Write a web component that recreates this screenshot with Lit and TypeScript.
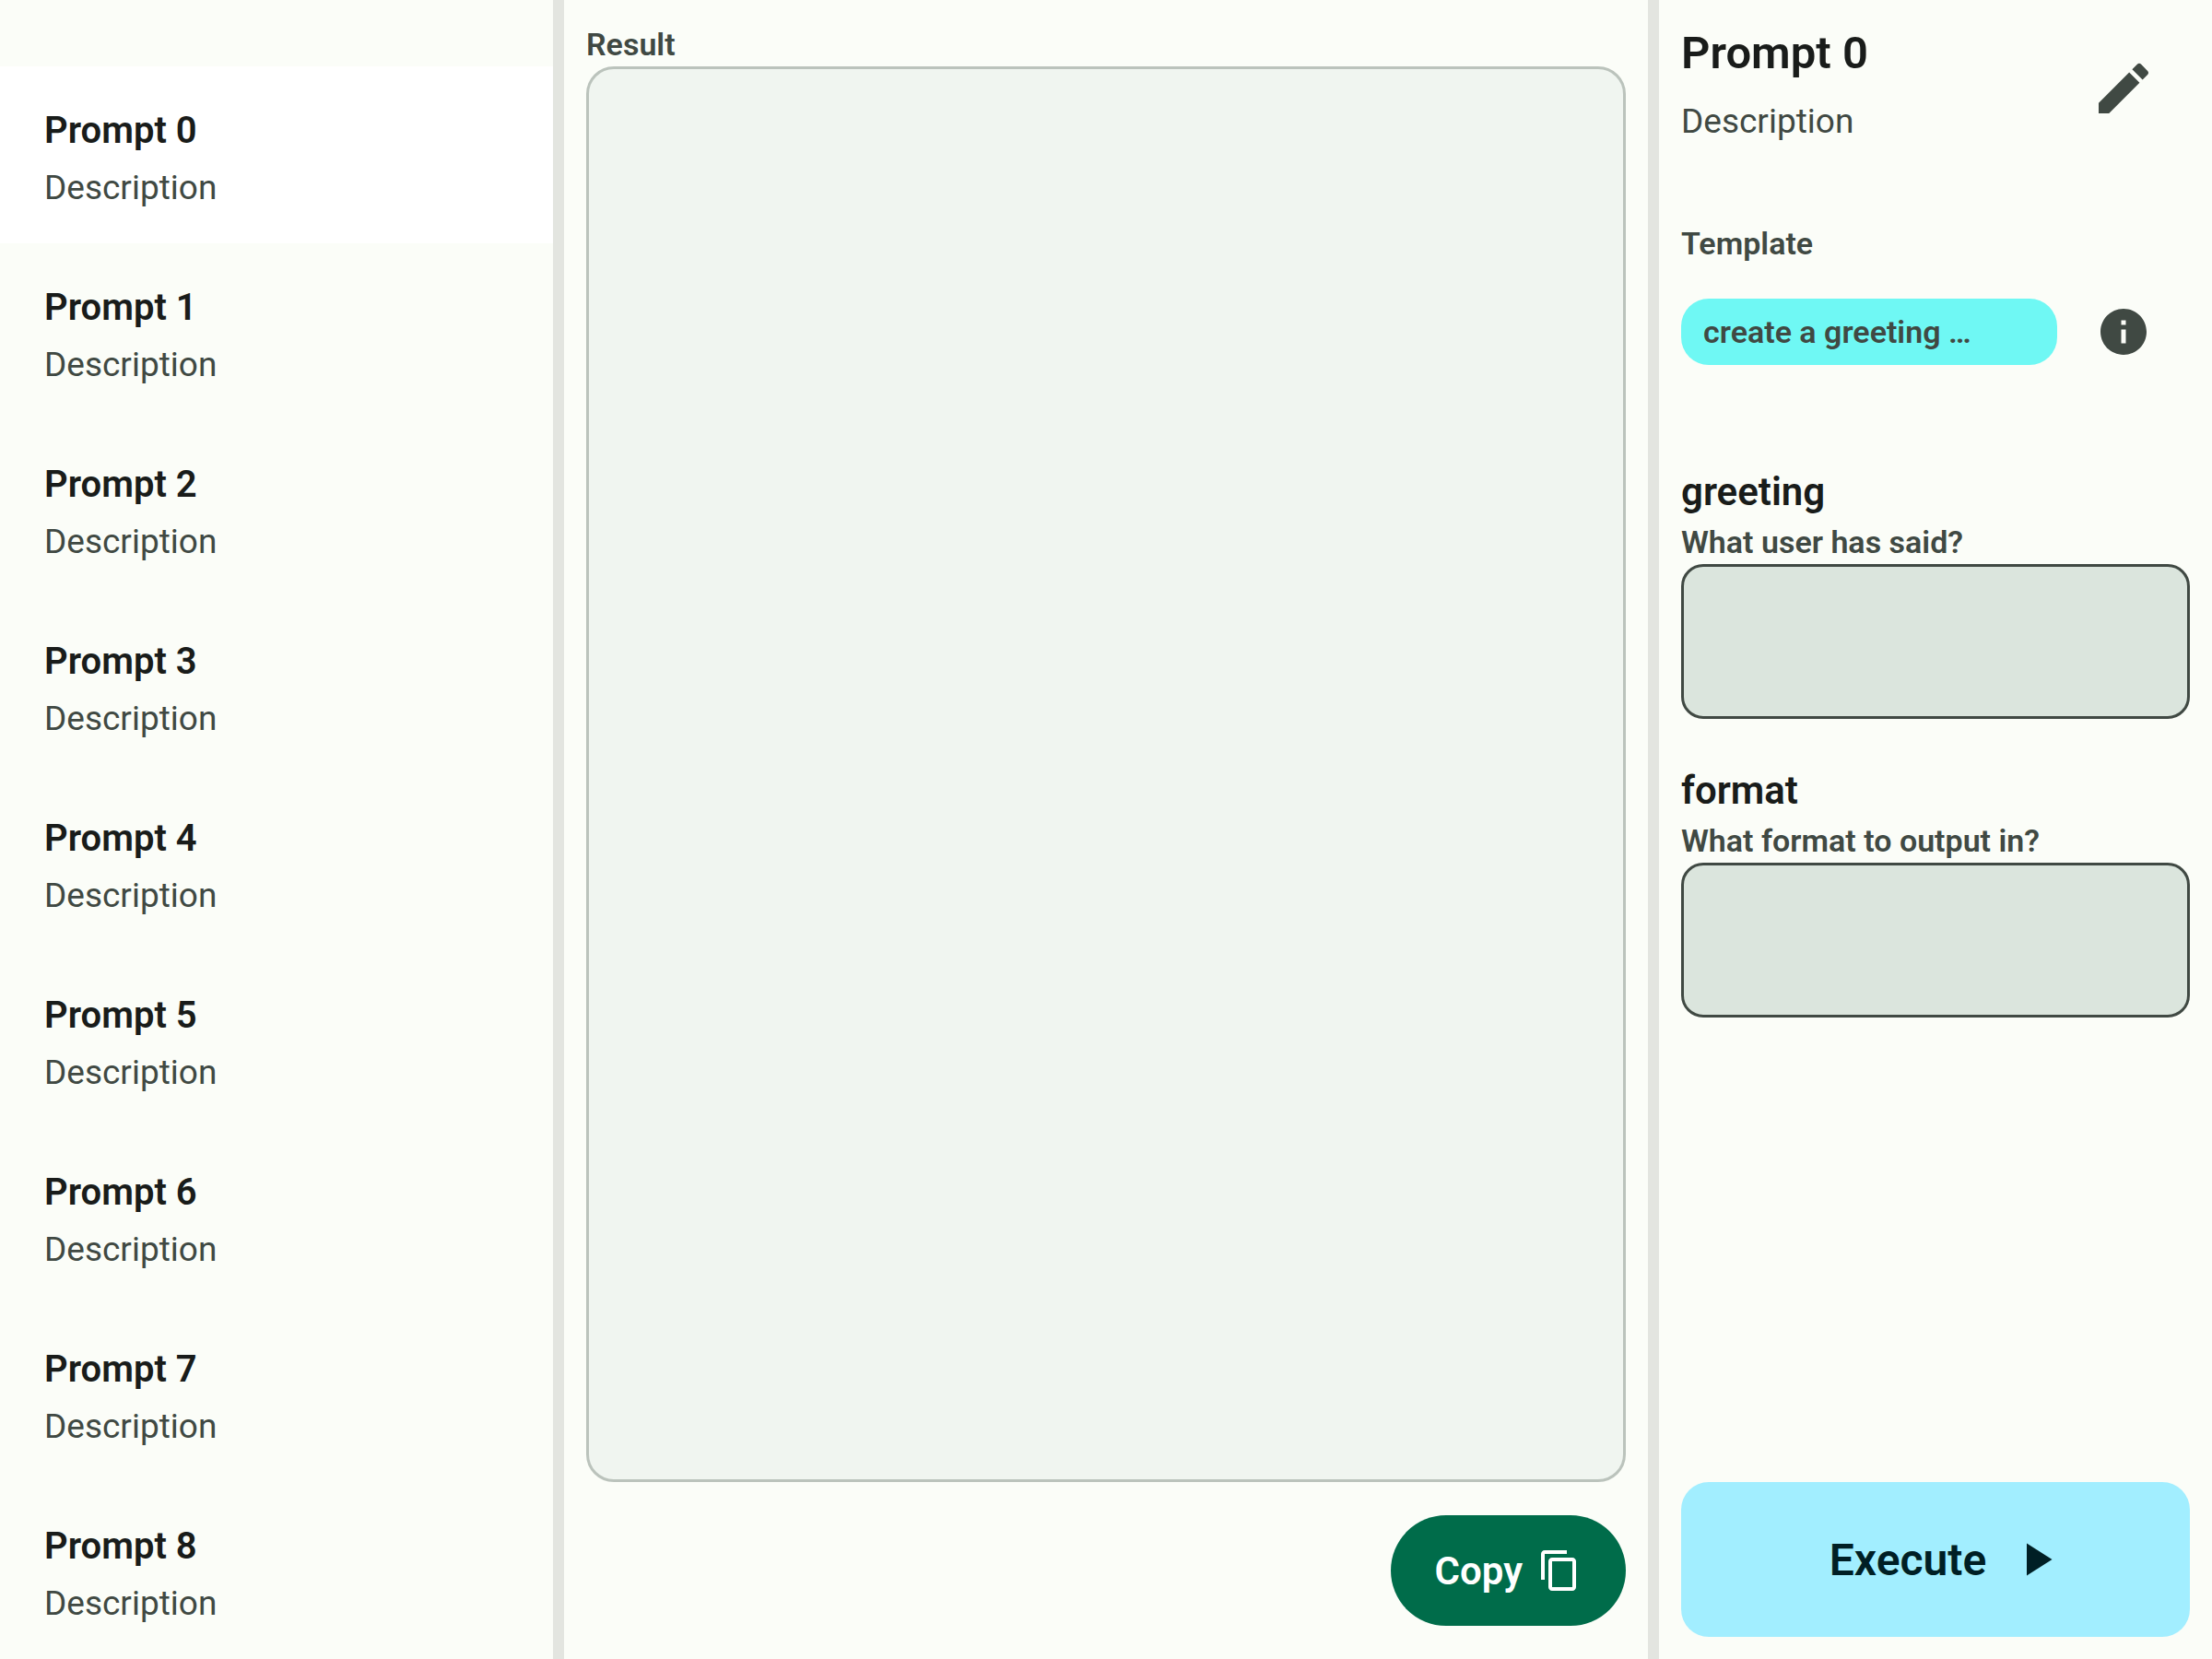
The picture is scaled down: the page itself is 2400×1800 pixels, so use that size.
import { LitElement, html, css, svg } from "lit";
import { customElement, property, state } from "lit/decorators.js";
import { classMap } from "lit/directives/class-map.js";

interface PromptField {
  name: string;
  hint: string;
}

interface Prompt {
  title: string;
  description: string;
  template: string;
  fields: PromptField[];
}

const PROMPTS: Prompt[] = Array.from({ length: 9 }, (_, i) => ({
  title: `Prompt ${i}`,
  description: "Description",
  template: "create a greeting …",
  fields: [
    { name: "greeting", hint: "What user has said?" },
    { name: "format", hint: "What format to output in?" },
  ],
}));

const ICONS = {
  edit: svg`<path d="M3 17.25V21h3.75L17.81 9.94l-3.75-3.75L3 17.25zM20.71 7.04c.39-.39.39-1.02 0-1.41l-2.34-2.34a.9959.9959 0 0 0-1.41 0l-1.83 1.83 3.75 3.75 1.83-1.83z"/>`,
  info: svg`<path d="M12 2C6.48 2 2 6.48 2 12s4.48 10 10 10 10-4.48 10-10S17.52 2 12 2zm1 15h-2v-6h2v6zm0-8h-2V7h2v2z"/>`,
  copy: svg`<path d="M16 1H4c-1.1 0-2 .9-2 2v14h2V3h12V1zm3 4H8c-1.1 0-2 .9-2 2v14c0 1.1.9 2 2 2h11c1.1 0 2-.9 2-2V7c0-1.1-.9-2-2-2zm0 16H8V7h11v14z"/>`,
  play: svg`<path d="M8 5v14l11-7z"/>`,
};

const icon = (name: keyof typeof ICONS) =>
  html`<svg class="icon ${name}" viewBox="0 0 24 24" fill="currentColor" aria-hidden="true">${ICONS[name]}</svg>`;

const shared = css`
  * {
    box-sizing: border-box;
  }
  h1,
  p {
    margin: 0;
  }
  button,
  textarea {
    font: inherit;
    color: inherit;
    border: 0;
    margin: 0;
    padding: 0;
    background: none;
  }
  button {
    cursor: pointer;
  }
  textarea {
    display: block;
    width: 100%;
    resize: none;
    outline: none;
  }
  .icon {
    display: block;
    flex: none;
  }
  .label {
    display: block;
    font-size: 34px;
    line-height: 48px;
    font-weight: 600;
    color: var(--muted);
  }
  .body {
    font-size: 37px;
    line-height: 48px;
    color: var(--muted);
  }
`;

@customElement("prompt-list")
export class PromptList extends LitElement {
  @property({ attribute: false }) prompts: Prompt[] = [];
  @property({ type: Number }) selected = 0;

  static styles = [
    shared,
    css`
      :host {
        display: block;
        padding-top: 72px;
      }
      .item {
        display: flex;
        flex-direction: column;
        gap: 8px;
        width: 100%;
        padding: 40px 48px 36px;
        text-align: left;
      }
      .item.selected {
        background: #ffffff;
      }
      .title {
        font-size: 40px;
        line-height: 60px;
        font-weight: 600;
      }
    `,
  ];

  private select(index: number) {
    this.dispatchEvent(new CustomEvent("prompt-select", { detail: index }));
  }

  render() {
    return html`
      <nav>
        ${this.prompts.map(
          (p, i) => html`
            <button
              class=${classMap({ item: true, selected: i === this.selected })}
              @click=${() => this.select(i)}
            >
              <span class="title">${p.title}</span>
              <span class="body">${p.description}</span>
            </button>
          `
        )}
      </nav>
    `;
  }
}

@customElement("result-pane")
export class ResultPane extends LitElement {
  static styles = [
    shared,
    css`
      :host {
        display: flex;
        flex-direction: column;
        padding: 24px 24px 36px;
      }
      .result {
        flex: 1;
        padding: 24px;
        border: 3px solid #bbc3bc;
        border-radius: 30px;
        background: #f0f5f0;
        font-size: 37px;
      }
      .copy-button {
        display: flex;
        align-items: center;
        align-self: flex-end;
        gap: 16px;
        height: 120px;
        margin-top: 36px;
        padding: 0 48px;
        border-radius: 60px;
        background: #006c4a;
        color: #ffffff;
        font-size: 42px;
        font-weight: 600;
      }
      .copy {
        width: 48px;
        height: 48px;
      }
    `,
  ];

  private copy() {
    const box = this.renderRoot.querySelector("textarea");
    navigator.clipboard?.writeText(box?.value ?? "");
  }

  render() {
    return html`
      <label class="label" for="result">Result</label>
      <textarea id="result" class="result" readonly></textarea>
      <button class="copy-button" @click=${this.copy}>Copy ${icon("copy")}</button>
    `;
  }
}

@customElement("prompt-panel")
export class PromptPanel extends LitElement {
  @property({ attribute: false }) prompt!: Prompt;

  static styles = [
    shared,
    css`
      :host {
        display: flex;
        flex-direction: column;
        padding: 24px;
      }
      .row {
        display: grid;
        grid-template-columns: minmax(0, 1fr) 72px;
        column-gap: 36px;
        align-items: center;
        padding-right: 36px;
      }
      .intro {
        padding-bottom: 12px;
      }
      .heading {
        font-size: 49px;
        line-height: 68px;
        font-weight: 600;
      }
      .heading + .body {
        margin-top: 16px;
      }
      .icon-button {
        display: grid;
        place-items: center;
        width: 72px;
        height: 72px;
        color: var(--muted);
      }
      .edit {
        width: 72px;
        height: 72px;
      }
      .info,
      .play {
        width: 60px;
        height: 60px;
      }
      .template-label {
        margin: 72px 0 36px;
      }
      .chip {
        padding: 12px 24px;
        border-radius: 30px;
        background: #6ff8f4;
        white-space: nowrap;
        overflow: hidden;
        text-overflow: ellipsis;
      }
      .fields {
        display: grid;
        gap: 48px;
        margin-top: 108px;
      }
      .name {
        display: block;
        font-size: 42px;
        line-height: 60px;
        font-weight: 600;
        color: var(--ink);
      }
      .input {
        height: 168px;
        padding: 24px;
        border: 3px solid #404943;
        border-radius: 24px;
        background: #dbe5dd;
        font-size: 37px;
      }
      .execute {
        display: flex;
        align-items: center;
        justify-content: center;
        gap: 24px;
        height: 168px;
        margin-top: auto;
        padding-left: 24px;
        border-radius: 30px;
        background: #a2eeff;
        color: #001f25;
        font-size: 48px;
        font-weight: 600;
      }
    `,
  ];

  render() {
    const p = this.prompt;
    return html`
      <div class="row">
        <div class="intro">
          <h1 class="heading">${p.title}</h1>
          <p class="body">${p.description}</p>
        </div>
        <button class="icon-button" aria-label="Edit">${icon("edit")}</button>
      </div>
      <p class="label template-label">Template</p>
      <div class="row">
        <div class="label chip">${p.template}</div>
        <button class="icon-button" aria-label="Info">${icon("info")}</button>
      </div>
      <div class="fields">
        ${p.fields.map(
          (f) => html`
            <div>
              <label class="label" for=${f.name}>
                <span class="name">${f.name}</span>
                ${f.hint}
              </label>
              <textarea id=${f.name} class="input"></textarea>
            </div>
          `
        )}
      </div>
      <button class="execute">Execute ${icon("play")}</button>
    `;
  }
}

@customElement("app-root")
export class AppRoot extends LitElement {
  @state() private selected = 0;

  static styles = css`
    :host {
      --ink: #191c1a;
      --muted: #404943;
      display: grid;
      grid-template-columns: 25% minmax(0, 1fr) 25%;
      min-height: 100vh;
      background: #fbfdf8;
      color: var(--ink);
      font-family: Roboto, "Liberation Sans", sans-serif;
    }
    .middle {
      border: solid #e3e5e0;
      border-width: 0 12px;
    }
  `;

  render() {
    return html`
      <prompt-list
        .prompts=${PROMPTS}
        .selected=${this.selected}
        @prompt-select=${(e: CustomEvent<number>) => (this.selected = e.detail)}
      ></prompt-list>
      <result-pane class="middle"></result-pane>
      <prompt-panel .prompt=${PROMPTS[this.selected]}></prompt-panel>
    `;
  }
}
